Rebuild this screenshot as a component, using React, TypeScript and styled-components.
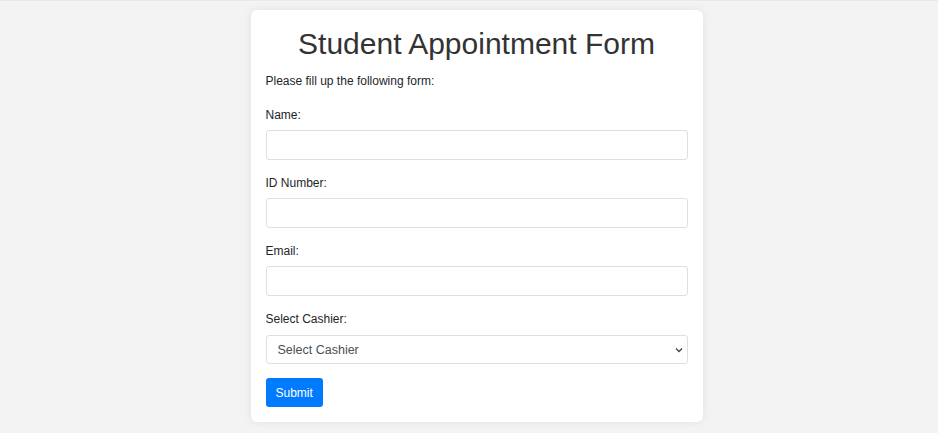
import React from "react";
import styled, { createGlobalStyle } from "styled-components";

const Global = createGlobalStyle`
  html, body { margin: 0; padding: 0; }
  body {
    background: #f3f3f3;
    font-family: "Liberation Sans", Arial, sans-serif;
    font-size: 12px;
    line-height: 1.5;
    color: #212529;
  }
  * { box-sizing: border-box; }
`;

const Page = styled.div`
  border-top: 1px solid #e8e8ea;
  padding: 9px 0 11px 15px;
  min-height: 433px;
`;

const Card = styled.div`
  width: 452px;
  margin: 0 auto;
  background: #fff;
  border-radius: 6px;
  box-shadow: 0 0 8px rgba(0, 0, 0, 0.08);
  padding: 15px 15px 15px;
`;

const Title = styled.h1`
  margin: 1px 0 10px;
  font-size: 30px;
  font-weight: 400;
  line-height: 36px;
  text-align: center;
  color: #333;
`;

const Intro = styled.p`
  margin: 0 0 16px;
  line-height: 18px;
  color: #212529;
`;

const Group = styled.div`
  display: flex;
  flex-direction: column;
  margin-bottom: 14px;
`;

const Label = styled.label`
  line-height: 18px;
  margin-bottom: 6px;
  color: #212529;
`;

const Input = styled.input`
  height: 30px;
  width: 100%;
  border: 1px solid #dcdfe3;
  border-radius: 3px;
  padding: 4px 9px;
  font-family: inherit;
  font-size: 12px;
  outline: none;
`;

const SelectWrap = styled.div`
  position: relative;
  margin-top: 1px;
`;

const Select = styled.select`
  appearance: none;
  display: block;
  height: 29px;
  width: 100%;
  border: 1px solid #dcdfe3;
  border-radius: 3px;
  padding: 3px 11px;
  font-family: inherit;
  font-size: 12.5px;
  color: #495057;
  background: #fff;
  outline: none;
`;

const Chevron = styled.svg`
  position: absolute;
  right: 5px;
  top: 12px;
  pointer-events: none;
`;

const Button = styled.button`
  height: 29px;
  padding: 0 10px;
  border: none;
  border-radius: 3px;
  background: #007bff;
  color: #fff;
  font-family: inherit;
  font-size: 12px;
  cursor: pointer;
`;

export default function App() {
  return (
    <>
      <Global />
      <Page>
        <Card>
          <Title>Student Appointment Form</Title>
          <Intro>Please fill up the following form:</Intro>
          <Group>
            <Label>Name:</Label>
            <Input type="text" />
          </Group>
          <Group>
            <Label>ID Number:</Label>
            <Input type="text" />
          </Group>
          <Group>
            <Label>Email:</Label>
            <Input type="email" />
          </Group>
          <Group>
            <Label>Select Cashier:</Label>
            <SelectWrap>
              <Select defaultValue="">
                <option value="">Select Cashier</option>
              </Select>
              <Chevron width="8" height="6" viewBox="0 0 8 6">
                <path d="M1 1.5 L4 4.5 L7 1.5" fill="none" stroke="#444" strokeWidth="1.3" />
              </Chevron>
            </SelectWrap>
          </Group>
          <Button type="button">Submit</Button>
        </Card>
      </Page>
    </>
  );
}
